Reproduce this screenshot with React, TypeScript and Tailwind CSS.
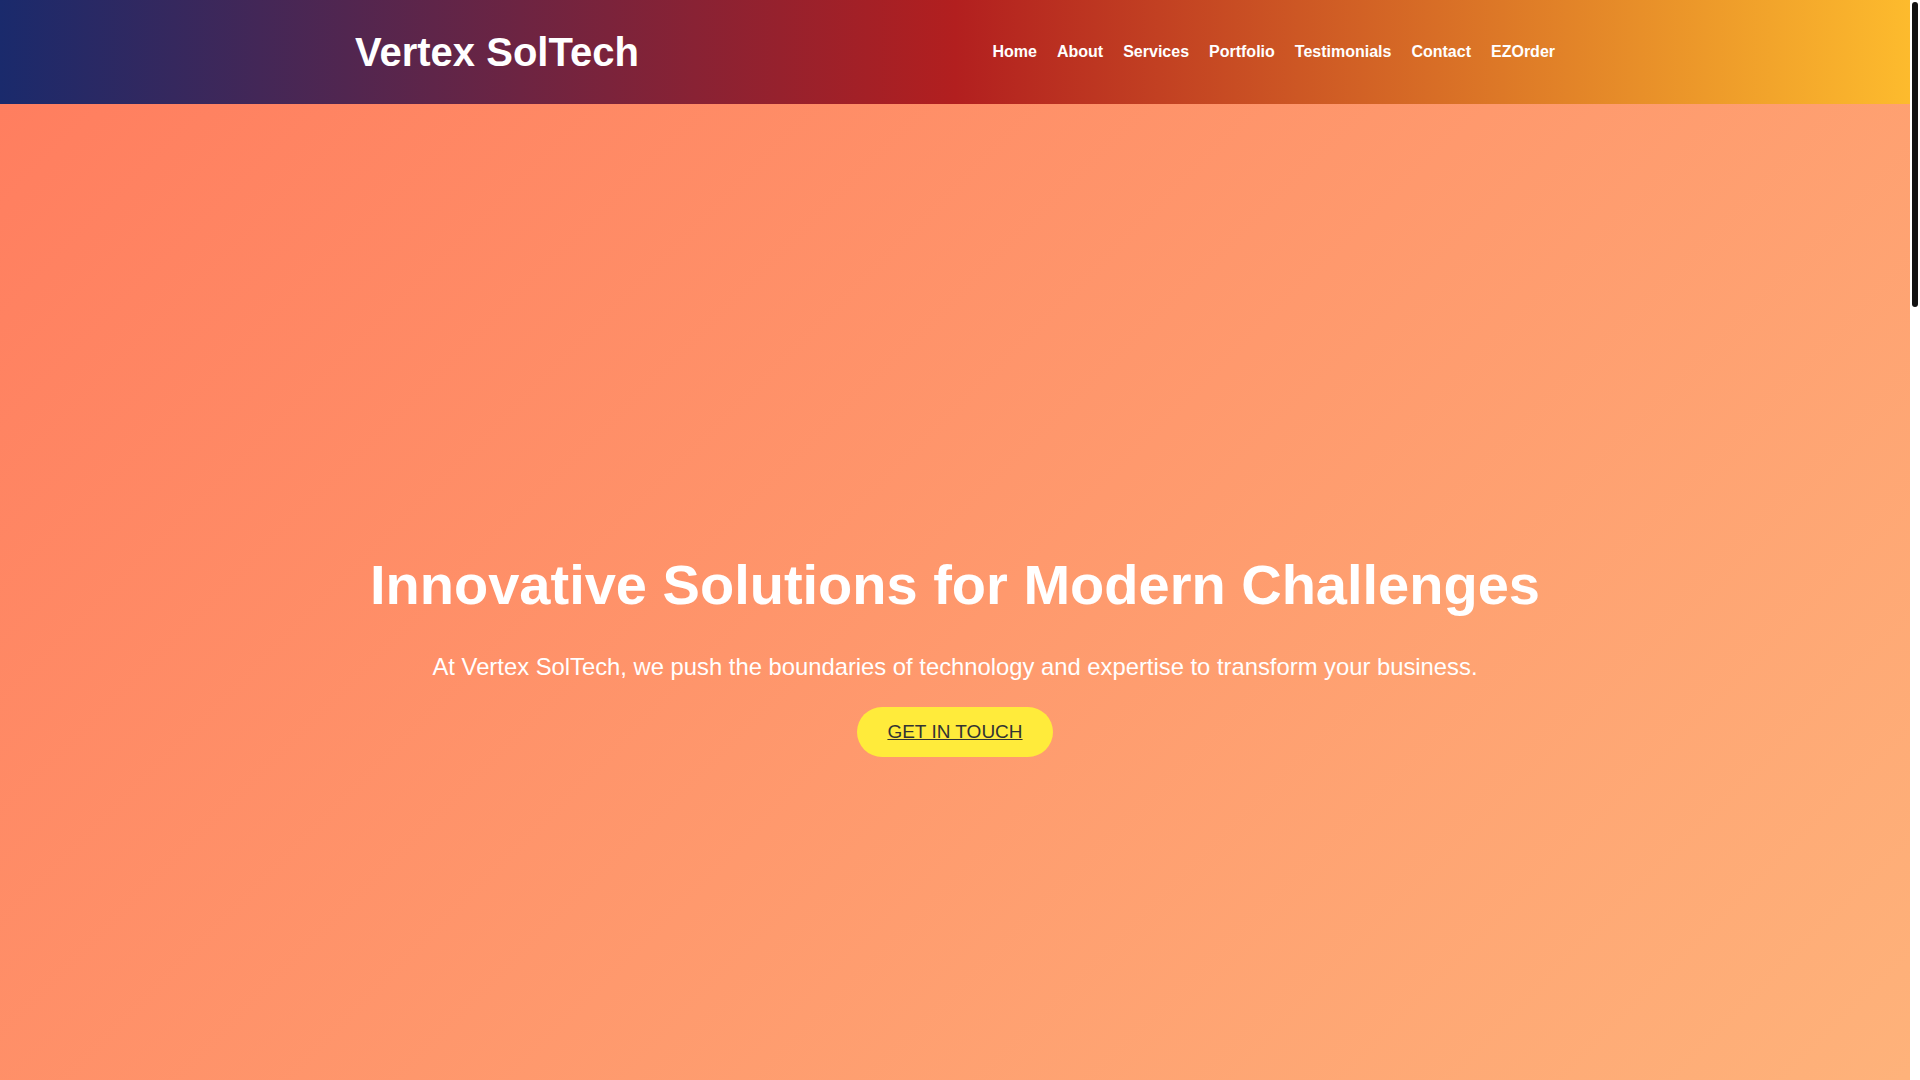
const navLinks = [
  "Home",
  "About",
  "Services",
  "Portfolio",
  "Testimonials",
  "Contact",
  "EZOrder",
];

function Header() {
  return (
    <header className="bg-[linear-gradient(to_right,#1a2a6c,#b21f1f,#fdbb2d)] text-white">
      <div className="mx-auto flex h-[104px] max-w-[1200px] items-center justify-between">
        <h1 className="text-[40px] font-bold leading-none">Vertex SolTech</h1>
        <nav className="flex gap-5">
          {navLinks.map((link) => (
            <a
              key={link}
              href={`#${link.toLowerCase()}`}
              className="text-base font-bold text-white"
            >
              {link}
            </a>
          ))}
        </nav>
      </div>
    </header>
  );
}

function Hero() {
  return (
    <section
      id="home"
      className="flex min-h-[1080px] flex-col items-center justify-center bg-[linear-gradient(135deg,#ff7e5f,#feb47b)] pt-[12px] text-center text-white"
    >
      <h2 className="mb-[22px] text-[56px] font-bold">
        Innovative Solutions for Modern Challenges
      </h2>
      <p className="mb-[23px] text-[23.8px]">
        At Vertex SolTech, we push the boundaries of technology and expertise
        to transform your business.
      </p>
      <a
        href="#contact"
        className="flex h-[50px] items-center rounded-full bg-[#ffeb3b] px-[30px] text-[19px] text-[#333] underline"
      >
        GET IN TOUCH
      </a>
    </section>
  );
}

// the reference was shot with the page scrolled to the top, thin scrollbar visible
function Scrollbar() {
  return (
    <div className="fixed right-0 top-0 h-screen w-[10px] bg-white">
      <div className="mt-[2px] ml-[2px] h-[305px] w-[6px] rounded-full bg-[#111]" />
    </div>
  );
}

export default function App() {
  return (
    <div className="mr-[10px] font-['Liberation_Sans',Arial,sans-serif]">
      <Header />
      <Hero />
      <Scrollbar />
    </div>
  );
}
